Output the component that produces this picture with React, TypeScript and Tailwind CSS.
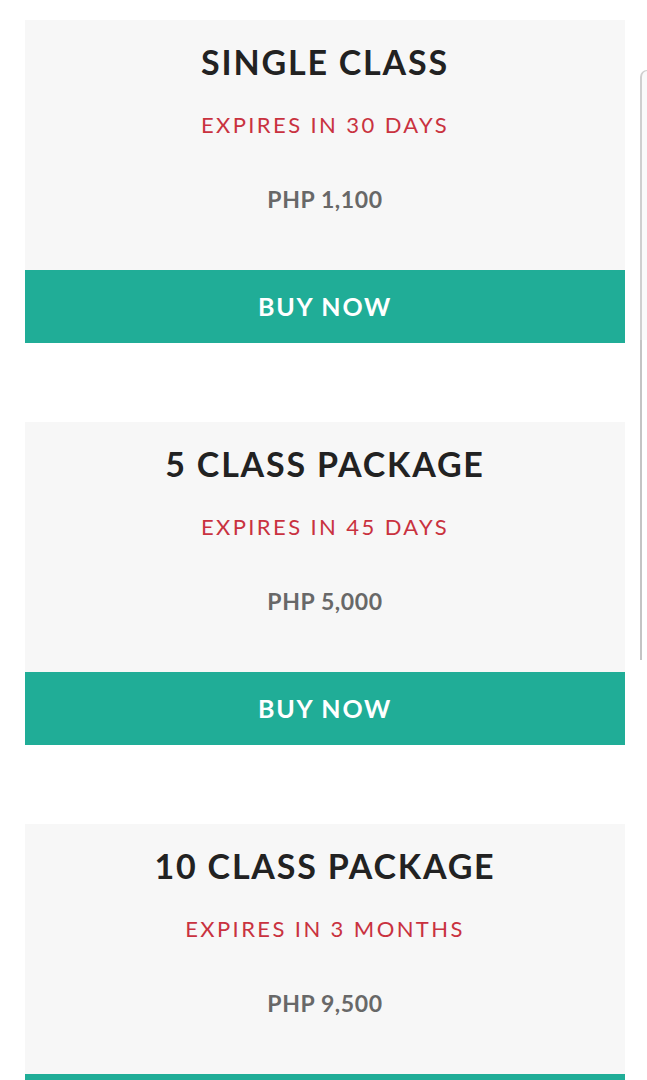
const packages = [
  { name: "SINGLE CLASS", expires: "EXPIRES IN 30 DAYS", price: "PHP 1,100" },
  { name: "5 CLASS PACKAGE", expires: "EXPIRES IN 45 DAYS", price: "PHP 5,000" },
  { name: "10 CLASS PACKAGE", expires: "EXPIRES IN 3 MONTHS", price: "PHP 9,500" },
];

const App = () => {
  return (
    <div className="relative min-h-screen bg-white overflow-hidden font-['Lato','Liberation_Sans',sans-serif]">
      <div className="flex flex-col gap-[79px] pl-[25px] pr-[22px] pt-[20px]">
        {packages.map((pkg) => (
          <div key={pkg.name} className="flex flex-col">
            <div className="h-[250px] bg-[#f7f7f7] flex flex-col items-center pt-[22px]">
              <h2 className="text-[34px] leading-[40px] font-bold tracking-[1.8px] text-[#222222]">
                {pkg.name}
              </h2>
              <p className="mt-[29px] text-[22px] leading-[28px] tracking-[2.4px] text-[#c9323f]">
                {pkg.expires}
              </p>
              <p className="mt-[46px] text-[23px] leading-[28px] font-bold tracking-[0.6px] text-[#686868]">
                {pkg.price}
              </p>
            </div>
            <button className="h-[73px] w-full bg-[#20ad97] text-white text-[25px] font-bold tracking-[1.8px]">
              BUY NOW
            </button>
          </div>
        ))}
      </div>

      {/* overlay scroll handle on the right edge */}
      <div className="absolute right-0 top-[70px] w-[7px] flex flex-col">
        <div className="h-[270px] bg-[#fafafa] border-l-2 border-t border-[#cfcfcf] rounded-tl-[8px]" />
        <div className="h-[320px] w-[2px] bg-[#c4c4c4]" />
      </div>
    </div>
  );
};

export default App;
